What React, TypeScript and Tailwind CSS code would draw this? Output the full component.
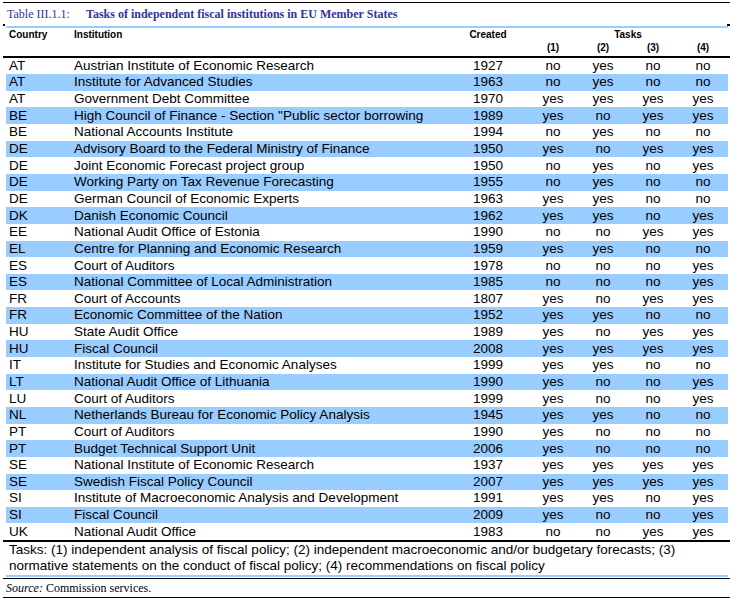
type Row = [string, string, string, string, string, string, string];

const rows: Row[] = [
  ['AT', 'Austrian Institute of Economic Research', '1927', 'no', 'yes', 'no', 'no'],
  ['AT', 'Institute for Advanced Studies', '1963', 'no', 'yes', 'no', 'no'],
  ['AT', 'Government Debt Committee', '1970', 'yes', 'yes', 'yes', 'yes'],
  ['BE', 'High Council of Finance - Section "Public sector borrowing', '1989', 'yes', 'no', 'yes', 'yes'],
  ['BE', 'National Accounts Institute', '1994', 'no', 'yes', 'no', 'no'],
  ['DE', 'Advisory Board to the Federal Ministry of Finance', '1950', 'yes', 'no', 'yes', 'yes'],
  ['DE', 'Joint Economic Forecast project group', '1950', 'no', 'yes', 'no', 'yes'],
  ['DE', 'Working Party on Tax Revenue Forecasting', '1955', 'no', 'yes', 'no', 'no'],
  ['DE', 'German Council of Economic Experts', '1963', 'yes', 'yes', 'no', 'no'],
  ['DK', 'Danish Economic Council', '1962', 'yes', 'yes', 'no', 'yes'],
  ['EE', 'National Audit Office of Estonia', '1990', 'no', 'no', 'yes', 'yes'],
  ['EL', 'Centre for Planning and Economic Research', '1959', 'yes', 'yes', 'no', 'no'],
  ['ES', 'Court of Auditors', '1978', 'no', 'no', 'no', 'yes'],
  ['ES', 'National Committee of Local Administration', '1985', 'no', 'no', 'no', 'yes'],
  ['FR', 'Court of Accounts', '1807', 'yes', 'no', 'yes', 'yes'],
  ['FR', 'Economic Committee of the Nation', '1952', 'yes', 'yes', 'no', 'no'],
  ['HU', 'State Audit Office', '1989', 'yes', 'no', 'yes', 'yes'],
  ['HU', 'Fiscal Council', '2008', 'yes', 'yes', 'yes', 'yes'],
  ['IT', 'Institute for Studies and Economic Analyses', '1999', 'yes', 'yes', 'no', 'no'],
  ['LT', 'National Audit Office of Lithuania', '1990', 'yes', 'no', 'no', 'yes'],
  ['LU', 'Court of Auditors', '1999', 'yes', 'no', 'no', 'yes'],
  ['NL', 'Netherlands Bureau for Economic Policy Analysis', '1945', 'yes', 'yes', 'no', 'no'],
  ['PT', 'Court of Auditors', '1990', 'yes', 'no', 'no', 'no'],
  ['PT', 'Budget Technical Support Unit', '2006', 'yes', 'no', 'no', 'no'],
  ['SE', 'National Institute of Economic Research', '1937', 'yes', 'yes', 'yes', 'yes'],
  ['SE', 'Swedish Fiscal Policy Council', '2007', 'yes', 'yes', 'yes', 'yes'],
  ['SI', 'Institute of Macroeconomic Analysis and Development', '1991', 'yes', 'yes', 'no', 'yes'],
  ['SI', 'Fiscal Council', '2009', 'yes', 'no', 'no', 'yes'],
  ['UK', 'National Audit Office', '1983', 'no', 'no', 'yes', 'yes'],
];

// country | institution | created | gap | (1)..(4)
const cols = 'grid grid-cols-[68px_389px_50px_15px_50px_50px_50px_50px]';

export default function App() {
  return (
    <div className="w-[738px] h-[603px] bg-white text-black font-['Liberation_Sans',Arial,sans-serif] pl-[3px]">
      <div className="w-[727px]">
        <div className="h-[2px]" />
        <div className="h-px bg-black" />

        {/* Title */}
        <div className="h-[21px] flex items-center pl-[4px] text-[12px] text-[#333399] font-['Liberation_Serif',serif] whitespace-nowrap">
          <span className="w-[79px]">Table III.1.1:</span>
          <span className="font-bold">Tasks of independent fiscal institutions in EU Member States</span>
        </div>
        <div className="h-[1.5px] flex justify-between">
          <div className="w-[2px] bg-black" />
          <div className="w-[3px] bg-black" />
        </div>
        <div className="h-[2px] bg-[#99ccff] ml-[3px] mr-[2px]" />

        {/* Header */}
        <div className="ml-[3px] mr-[2px] h-[27px] text-[10px] font-bold leading-[12px]">
          <div className={`${cols} h-[12px] mt-px`}>
            <div className="pl-[3px]">Country</div>
            <div>Institution</div>
            <div className="text-center">Created</div>
            <div />
            <div className="col-span-4 text-center">Tasks</div>
          </div>
          <div className={`${cols} h-[12px] mt-[1.5px]`}>
            <div />
            <div />
            <div />
            <div />
            <div className="text-center">(1)</div>
            <div className="text-center">(2)</div>
            <div className="text-center">(3)</div>
            <div className="text-center">(4)</div>
          </div>
        </div>
        <div className="h-[2px] bg-black" />

        {/* Body */}
        <div className="ml-[3px] mr-[2px] text-[13.5px]">
          {rows.map((r, i) => (
            <div
              key={i}
              className={`${cols} h-[16.65px] items-center leading-[16px] ${i % 2 === 1 ? 'bg-[#99ccff]' : ''}`}
            >
              <div className="pl-[3px]">{r[0]}</div>
              <div className="whitespace-nowrap">{r[1]}</div>
              <div className="text-center">{r[2]}</div>
              <div />
              <div className="text-center">{r[3]}</div>
              <div className="text-center">{r[4]}</div>
              <div className="text-center">{r[5]}</div>
              <div className="text-center">{r[6]}</div>
            </div>
          ))}
        </div>
        <div className="h-[2px] bg-black" />

        {/* Notes */}
        <div className="ml-[3px] mr-[2px] pl-[3px] h-[32.5px] text-[13.5px] leading-[16px]">
          Tasks: (1) independent analysis of fiscal policy; (2) independent macroeconomic and/or budgetary forecasts; (3)
          <br />
          normative statements on the conduct of fiscal policy; (4) recommendations on fiscal policy
        </div>
        <div className="h-[2px] bg-[#99ccff] ml-[3px] mr-[2px]" />
        <div className="h-[1.5px]" />
        <div className="h-px bg-black" />
        <div className="h-[18px] flex items-center pl-[3px] text-[12px] font-['Liberation_Serif',serif]">
          <span className="italic">Source:</span>
          <span>&nbsp;Commission services.</span>
        </div>
        <div className="h-px bg-black" />
      </div>
    </div>
  );
}
